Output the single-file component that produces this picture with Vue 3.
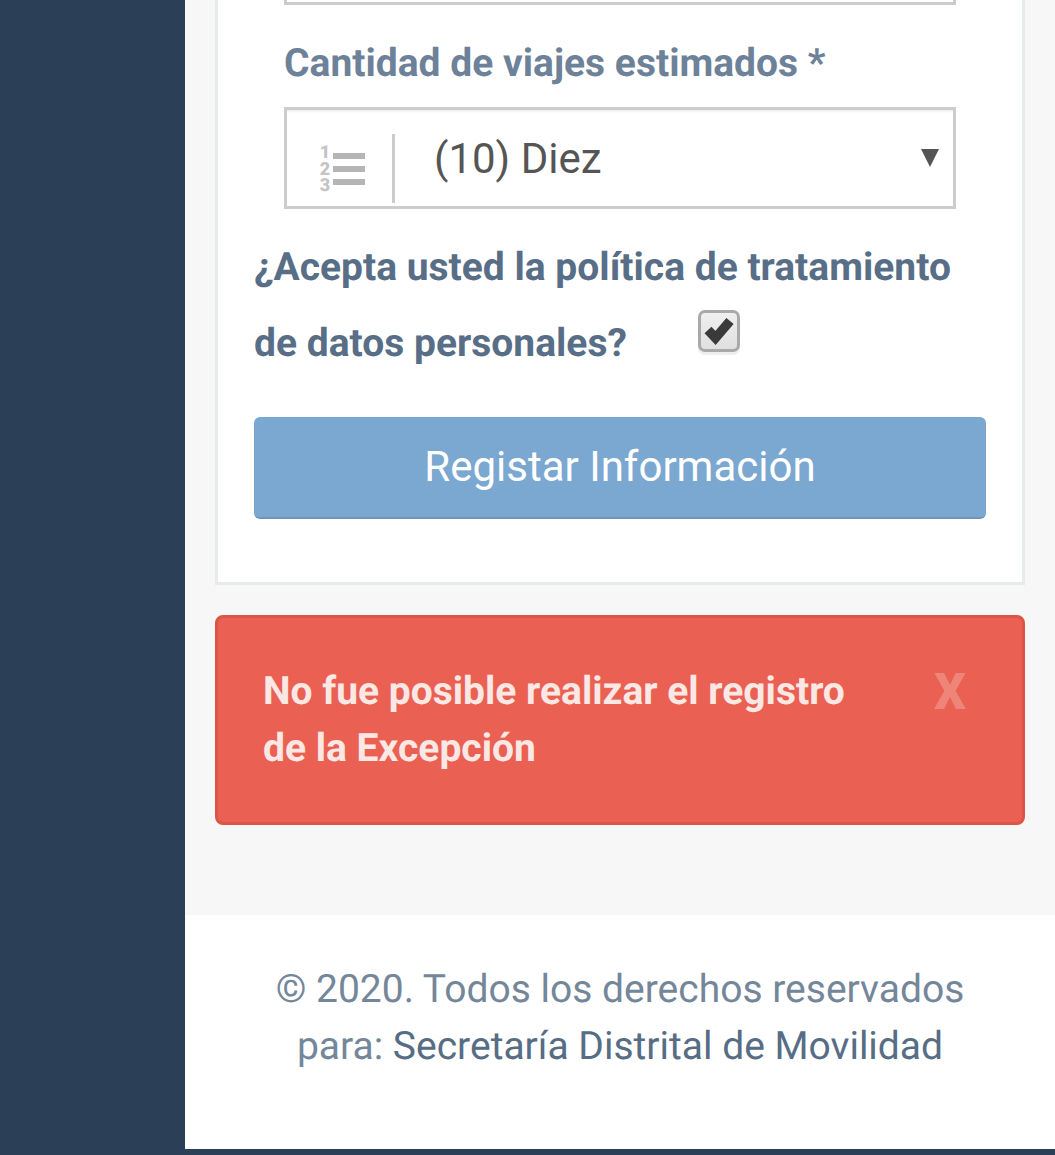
<script setup>
import { ref } from 'vue'

const viajes = ref('10')
const acepta = ref(true)
const showAlert = ref(true)
</script>

<template>
  <div class="page">
    <aside class="sidebar"></aside>

    <div class="content">
      <main class="main">
        <section class="card">
          <div class="field">
            <div class="prev-input"></div>
            <label class="label" for="viajes">Cantidad de viajes estimados *</label>
            <div class="select-box">
              <span class="select-icon">
                <svg class="list-icon" width="46" height="46" viewBox="0 0 46 46">
                  <g fill="#b5b5b5">
                    <rect x="13" y="9" width="32" height="6" />
                    <rect x="13" y="22" width="32" height="6" />
                    <rect x="13" y="35" width="32" height="6" />
                  </g>
                  <g fill="#c4c4c4" font-family="'Roboto', sans-serif" font-weight="900" font-size="18" text-anchor="middle">
                    <text x="5" y="14">1</text>
                    <text x="5" y="31">2</text>
                    <text x="5" y="47">3</text>
                  </g>
                </svg>
              </span>
              <select id="viajes" v-model="viajes" class="select">
                <option value="10">(10) Diez</option>
              </select>
              <svg class="arrow" width="18" height="18" viewBox="0 0 18 18">
                <path d="M0 0H18L9 18Z" fill="#555" />
              </svg>
            </div>
          </div>

          <div class="policy">
            <span>¿Acepta usted la política de tratamiento de datos personales?</span>
            <button class="check" :class="{ off: !acepta }" @click="acepta = !acepta">
              <svg v-if="acepta" width="36" height="36" viewBox="0 0 36 36">
                <path d="M7 17L14.5 25L29 8" fill="none" stroke="#3a3a3a" stroke-width="9.5" />
              </svg>
            </button>
          </div>

          <button class="submit">Registar Información</button>
        </section>

        <div v-if="showAlert" class="alert">
          <p>No fue posible realizar el registro de la Excepción</p>
          <button class="close" @click="showAlert = false">X</button>
        </div>
      </main>

      <footer class="footer">
        © 2020. Todos los derechos reservados<br />
        para: <a href="#">Secretaría Distrital de Movilidad</a>
      </footer>
    </div>
  </div>
</template>

<style>
body {
  background: #2b3f56;
}
</style>

<style scoped>
.page {
  display: flex;
  height: 1155px;
  overflow: hidden;
  background: #2b3f56;
  font-family: "Roboto", sans-serif;
  text-rendering: geometricPrecision;
}

.sidebar {
  width: 185px;
  flex-shrink: 0;
}

.content {
  flex: 1;
  min-width: 0;
  display: flex;
  flex-direction: column;
}

.main {
  height: 915px;
  padding: 0 30px;
  background: #f7f7f7;
  box-sizing: border-box;
}

.card {
  height: 585px;
  padding: 0 36px;
  box-sizing: border-box;
  background: #fff;
  border: 3px solid #e7ebee;
  border-top: none;
}

.field {
  padding: 0 30px;
}

.prev-input {
  height: 2px;
  border: 3px solid #ccc;
  border-top: none;
}

.label {
  display: block;
  margin-top: 30px;
  font-size: 39px;
  line-height: 56px;
  font-weight: 700;
  color: #6d8298;
}

.select-box {
  position: relative;
  display: flex;
  align-items: stretch;
  height: 102px;
  margin-top: 16px;
  box-sizing: border-box;
  border: 3px solid #ccc;
  box-shadow: inset 0 3px 3px -2px #e6e6e6;
}

.select-icon {
  width: 108px;
  flex-shrink: 0;
  margin-top: 24px;
  margin-bottom: 3px;
  box-sizing: border-box;
  padding: 10px 0 0 33px;
  border-right: 3px solid #ccc;
}

.list-icon {
  overflow: visible;
}

.select {
  flex: 1;
  min-width: 0;
  padding: 0 0 0 39px;
  border: none;
  outline: none;
  appearance: none;
  background: transparent;
  font-family: inherit;
  font-size: 42px;
  color: #555;
}

.arrow {
  position: absolute;
  top: 39px;
  right: 14px;
  pointer-events: none;
}

.policy {
  margin-top: 20px;
  font-size: 39px;
  line-height: 76px;
  font-weight: 700;
  color: #586e87;
}

.check {
  display: inline-flex;
  width: 42px;
  height: 42px;
  margin-left: 71px;
  padding: 0;
  vertical-align: 7px;
  box-sizing: border-box;
  border: 3px solid #a9a9a9;
  border-radius: 7px;
  background: linear-gradient(#efefef, #e0e0e0);
  box-shadow: 0 3px 1px #eee;
}

.check.off {
  background: #fff;
}

.submit {
  display: block;
  width: 100%;
  height: 102px;
  margin-top: 36px;
  padding: 0 0 2px;
  border: none;
  border-bottom: 2px solid #6f98bd;
  border-radius: 6px;
  background: #7ba8d0;
  font-family: inherit;
  font-size: 42px;
  color: #fff;
}

.alert {
  display: flex;
  justify-content: space-between;
  height: 210px;
  margin-top: 30px;
  padding: 45px 45px 0;
  box-sizing: border-box;
  background: #ea6153;
  border: 3px solid #dc5548;
  border-radius: 8px;
}

.alert p {
  width: 610px;
  margin: 0;
  font-size: 39px;
  line-height: 57px;
  font-weight: 700;
  color: #fbe8e5;
}

.close {
  height: 57px;
  margin: 0 11px 0 0;
  padding: 0;
  border: none;
  background: none;
  font-family: inherit;
  font-size: 50px;
  font-weight: 900;
  color: #ef8479;
}

.footer {
  flex: 1;
  margin-bottom: 6px;
  padding-top: 46px;
  background: #fff;
  text-align: center;
  font-size: 39px;
  line-height: 57px;
  color: #74879a;
}

.footer a {
  color: #566d85;
  text-decoration: none;
}
</style>
